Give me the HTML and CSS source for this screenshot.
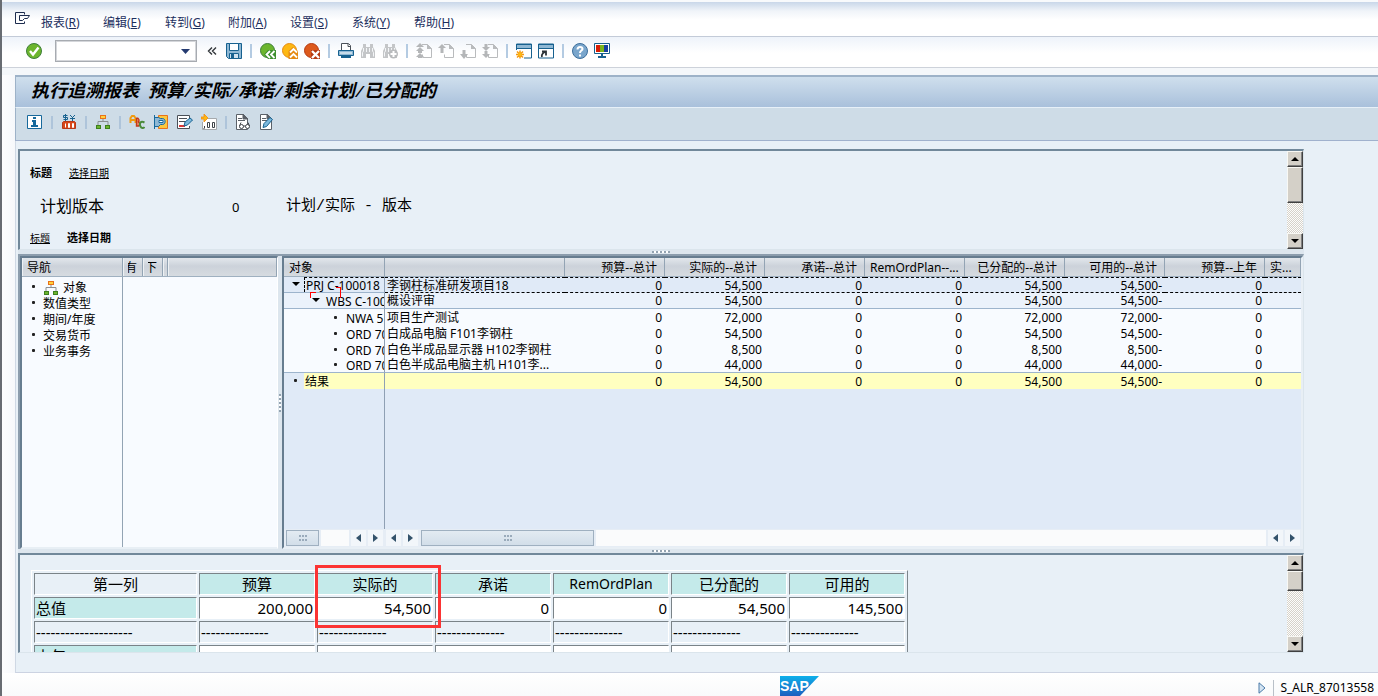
FILE: index.html
```html
<!DOCTYPE html>
<html lang="zh-CN">
<head>
<meta charset="utf-8">
<title>执行追溯报表</title>
<link rel="stylesheet" href="styles.css">
</head>
<body>
<svg class="defs" aria-hidden="true">
  <defs>
    <symbol id="bino" viewBox="0 0 16 16"><path d="M3 1h3v3h4V1h3v3l2 4v7h-5v-4H6v4H1V8l2-4z" fill="#c4c6c8"/><path d="M3.500 5v3l-1 1.500v4M12.500 5v3l1 1.500v4M6.500 5v4M9.500 5v4" stroke="#f4f6f8" fill="none"/></symbol>
    <symbol id="page" viewBox="0 0 16 16"><path d="M6 1.500h5.500l4 4v9h-9v-3" fill="none" stroke="#b9bbbd"/><path d="M11 1v5h5z" fill="#b9bbbd"/></symbol>
    <symbol id="org" viewBox="0 0 16 16"><path d="M8 5v3M3 11V7.500h10V11" fill="none" stroke="#8b8f92"/><rect x="5.500" y="1.500" width="5" height="3" fill="#ffd23c" stroke="#e8721a"/><rect x="1.500" y="11.500" width="4" height="3" fill="#6cb52d" stroke="#3d7f1e"/><rect x="10.500" y="11.500" width="4" height="3" fill="#6cb52d" stroke="#3d7f1e"/></symbol>
    <symbol id="window" viewBox="0 0 16 16"><path d="M.5 1v14h15V1z" fill="#fff" stroke="#17618f"/><path d="M0 1h16v5H0z" fill="#17618f"/><path d="M1 2h14v3H1z" fill="#8fb8d4"/></symbol>
  </defs>
</svg>
<div class="app">
  <nav class="menubar" aria-label="菜单">
    <button class="icon-btn" aria-label="系统菜单"><svg width="16" height="14" viewBox="0 0 16 14"><path d="M9.500 2.500V.5h-9v11h9v-2M4.500 3.500h10l-2 3h-3l-2 2h-3z" fill="none" stroke="#1d2c4e"/></svg></button>
    <a href="#">报表(<u>R</u>)</a><a href="#">编辑(<u>E</u>)</a><a href="#">转到(<u>G</u>)</a><a href="#">附加(<u>A</u>)</a><a href="#">设置(<u>S</u>)</a><a href="#">系统(<u>Y</u>)</a><a href="#">帮助(<u>H</u>)</a>
  </nav>

  <div class="toolbar" role="toolbar" aria-label="标准工具栏">
    <button class="icon-btn enter" aria-label="回车"><svg viewBox="0 0 16 16"><circle cx="8" cy="8" r="7.500" fill="#6cb52d" stroke="#3e7f3a"/><path d="M4 8l3 3.500 5.500-7" fill="none" stroke="#fff" stroke-width="2.400"/></svg></button>
    <div class="command">
      <input type="text" aria-label="命令">
      <button class="drop" aria-label="历史"><svg width="9" height="5" viewBox="0 0 9 5"><path d="M0 0h9L4.500 5z" fill="#243a70"/></svg></button>
    </div>
    <button class="icon-btn collapse" aria-label="收起"><svg class="chev" viewBox="0 0 10 16"><path d="M5 4.500L1.500 8 5 11.500M9 4.500L5.500 8 9 11.500" fill="none" stroke="#33373b" stroke-width="1.400"/></svg></button>
    <button class="icon-btn" aria-label="保存"><svg viewBox="0 0 16 16"><path d="M.5.5h15v15h-13l-2-2z" fill="#8fb8d4" stroke="#17618f"/><path d="M3.500.5h9v7h-9z" fill="#fff" stroke="#17618f"/><path d="M3.500 10.500h9v5h-9z" fill="#cfe2ef" stroke="#17618f"/><path d="M5 11h3v4H5z" fill="#17618f"/></svg></button>
    <span class="sep"></span>
    <button class="icon-btn" aria-label="返回"><svg viewBox="0 0 16 16"><circle cx="7.500" cy="7.500" r="7" fill="#6cb52d" stroke="#3e7f3a"/><path d="M8 7h8v9H8l-4-4.500z" fill="#3e8f2e"/><path d="M10 8l-3.500 3.500L10 15M14.500 8L11 11.500l3.500 3.500" fill="none" stroke="#fff" stroke-width="1.800"/></svg></button>
    <button class="icon-btn" aria-label="退出"><svg viewBox="0 0 16 16"><circle cx="7.500" cy="7.500" r="7" fill="#fdb813" stroke="#e58a12"/><path d="M6.500 16V8L11 4l5 4v8z" fill="#e58a12"/><path d="M8 9.500L11.500 6 15 9.500M8 14.500l3.500-3.500 3.500 3.500" fill="none" stroke="#fff" stroke-width="1.800"/></svg></button>
    <button class="icon-btn" aria-label="取消"><svg viewBox="0 0 16 16"><circle cx="7.500" cy="7.500" r="7" fill="#dd5a1c" stroke="#b53a12"/><path d="M7 7h9v9H7z" fill="#b53a12"/><path d="M8 8l7 7M15 8l-7 7" fill="none" stroke="#fff" stroke-width="2.400"/></svg></button>
    <span class="sep"></span>
    <button class="icon-btn" aria-label="打印"><svg viewBox="0 0 16 16"><path d="M3.500 8V.5h7l2 2V8" fill="#fff" stroke="#4a5058"/><path d="M10 1v2.500h3" fill="none" stroke="#4a5058"/><path d="M.5 7.500h15v5H.5z" fill="#8fb8d4" stroke="#17618f"/><path d="M2 10h12" stroke="#fff"/><path d="M3 13h10v2H3z" fill="#17618f"/></svg></button>
    <button class="icon-btn" aria-label="查找" disabled><svg viewBox="0 0 16 16"><use href="#bino"/></svg></button>
    <button class="icon-btn" aria-label="继续查找" disabled><svg viewBox="0 0 16 16"><use href="#bino"/><circle cx="11.500" cy="11" r="4.500" fill="#b9bbbd"/><path d="M11.500 8v6M8.500 11h6" stroke="#fff" stroke-width="2"/></svg></button>
    <span class="sep"></span>
    <button class="icon-btn" aria-label="首页" disabled><svg viewBox="0 0 16 16"><use href="#page"/><path d="M4 0l4 4H0zM4 4l4 4H0zM2 8h4v2H2zM4 10l4 4H0zM2 13h4v2H2z" fill="#b4b6b8"/></svg></button>
    <button class="icon-btn" aria-label="上一页" disabled><svg viewBox="0 0 16 16"><use href="#page"/><path d="M4 1l4 4H5.500v5h-3V5H0z" fill="#b4b6b8"/></svg></button>
    <button class="icon-btn" aria-label="下一页" disabled><svg viewBox="0 0 16 16"><use href="#page"/><path d="M4 16l4-5H5.500V7h-3v4H0z" fill="#b4b6b8"/></svg></button>
    <button class="icon-btn" aria-label="末页" disabled><svg viewBox="0 0 16 16"><use href="#page"/><path d="M2.500 1h3v3h-3zM4 8L0 4h8zM2.500 8h3v3h-3zM4 15l-4-4h8z" fill="#b4b6b8"/></svg></button>
    <span class="sep"></span>
    <button class="icon-btn" aria-label="新建会话"><svg viewBox="0 0 16 16"><use href="#window"/><path d="M0 7h8v9H0z" fill="#fff"/><path d="M4 7.500v8M0 11.500h8M1 8.500l6 6M7 8.500l-6 6" stroke="#f59a12" stroke-width="1.500"/><circle cx="4" cy="11.500" r="2" fill="#fdb813"/></svg></button>
    <button class="icon-btn" aria-label="创建快捷方式"><svg viewBox="0 0 16 16"><use href="#window"/><path d="M4 14c-1-3 1-4 3-5M4 8.500h4v4" fill="none" stroke="#2d3338" stroke-width="1.800"/></svg></button>
    <span class="sep"></span>
    <button class="icon-btn" aria-label="帮助"><svg viewBox="0 0 16 16"><circle cx="8" cy="8" r="7.500" fill="#7aa6cc" stroke="#3d6f9c"/><path d="M5.500 6.500c0-3.500 5-3 5-.5 0 1.500-2.500 1.800-2.500 4M8 11.500v2" fill="none" stroke="#fff" stroke-width="2"/></svg></button>
    <button class="icon-btn" aria-label="布局"><svg viewBox="0 0 16 16"><path d="M.5.500h15v10H.5z" fill="#fff" stroke="#17618f"/><path d="M2 2h4v7H2z" fill="#d81e05"/><path d="M6 2h4v7H6z" fill="#7ab51d"/><path d="M10 2h4v7h-4z" fill="#17409f"/><path d="M7 11h2v2h3v2H4v-2h3z" fill="#17618f"/></svg></button>
  </div>

  <main class="screen">
    <h1 class="title">执行追溯报表<span> </span>预算<span>/</span>实际<span>/</span>承诺<span>/</span>剩余计划<span>/</span>已分配的</h1>
    <div class="app-toolbar" role="toolbar" aria-label="应用工具栏">
      <button class="icon-btn" aria-label="信息"><svg viewBox="0 0 16 16"><path d="M.5 1.500h14v13H.5z" fill="#fff" stroke="#17699c"/><path d="M6 3h3v2H6zM5 6h4v5h2v2H4v-2h2V8H5z" fill="#17699c"/></svg></button>
      <span class="bar"></span>
      <button class="icon-btn" aria-label="货币"><svg viewBox="0 0 16 16"><path d="M6.500 1.500h-4v2h4v2h-4M4.500 0v7M9 1l2.500 2.500L14 1M11.500 3v4M9 4.500h5" fill="none" stroke="#17618f"/><path d="M2.500 7.500h11l1 1v6h-13v-6z" fill="#d8471a" stroke="#b5391a"/><path d="M4.500 9.500v4M7.500 9.500h1v4h-1zM11.500 9.500h1v4h-1z" fill="none" stroke="#fff"/></svg></button>
      <span class="bar"></span>
      <button class="icon-btn" aria-label="层次"><svg viewBox="0 0 16 16"><use href="#org"/></svg></button>
      <span class="bar"></span>
      <button class="icon-btn" aria-label="文本"><svg viewBox="0 0 16 16"><path d="M1.500 9V4l1.500-2h2l1.500 2v5M2 6h4" fill="none" stroke="#f09a10" stroke-width="2"/><path d="M7.500 4v8h2c2.500-1 1-4-.5-4 2-1 1-4-1.500-4" fill="#e88a6a" stroke="#c23a1a" stroke-width="1.400"/><path d="M15.500 8.500c-4-2-5.500 1-4 4 1 2 3 2 4 .5" fill="none" stroke="#4a8a3a" stroke-width="2"/></svg></button>
      <button class="icon-btn" aria-label="展开"><svg viewBox="0 0 16 16"><path d="M5.500 1.500h9v13h-9z" fill="#fdc83c" stroke="#e8721a"/><path d="M1.500 1v14M1.500 3.500h4l2 1h2c3.500 0 3.500 6 0 6h-2l-2 2h-4" fill="#8fb8d4" stroke="#17699c"/><path d="M6 6.500h4v2H6z" fill="#fff" stroke="#17699c"/></svg></button>
      <button class="icon-btn" aria-label="编辑文本"><svg viewBox="0 0 16 16"><path d="M12.500 5V1.500H.5v13h12V12" fill="#fff" stroke="#4a5058"/><path d="M2 4.500h8M2 7.500h6" stroke="#4a5058"/><path d="M2 11h6v2H2z" fill="#d83a3a"/><path d="M7 12l1-4 5-4 2.500 2-5 5z" fill="#7cb8dc" stroke="#17618f"/></svg></button>
      <button class="icon-btn" aria-label="小数位"><svg viewBox="0 0 16 16"><path d="M7 4.500h8.500v11H1.500V8" fill="#fff" stroke="#a5a9ad"/><path d="M0 3h3V0l4 4-4 4V5H0z" fill="#fdb813" stroke="#f08a10" stroke-width=".8"/><path d="M3.500 12v2l-1 1M6.500 8.500h2v5h-2zM11.500 8.500h2v5h-2z" fill="none" stroke="#3d4248"/></svg></button>
      <span class="bar"></span>
      <button class="icon-btn" aria-label="显示文档"><svg viewBox="0 0 16 16"><path d="M1.500.5h7l4 4v11h-11z" fill="#fff" stroke="#5b6168"/><path d="M8 0v5h5zM3 4.500h4M3 6.500h7" fill="#5b6168" stroke="#5b6168"/><path d="M4.500 12l1.500-3.500M14.500 12L13 8.500" stroke="#3d4248"/><circle cx="6.500" cy="12.500" r="2" fill="#fff" stroke="#3d4248"/><circle cx="12.500" cy="12.500" r="2" fill="#fff" stroke="#3d4248"/><path d="M8.500 12h2" stroke="#3d4248"/></svg></button>
      <button class="icon-btn" aria-label="更改文档"><svg viewBox="0 0 16 16"><path d="M1.500.5h7l4 4v11h-11z" fill="#fff" stroke="#5b6168"/><path d="M8 0v5h5zM3 4.500h4M3 6.500h5" fill="#5b6168" stroke="#5b6168"/><path d="M4 13.500l1-4 6-6 2.500 2-6 7z" fill="#7cb8dc" stroke="#17618f"/></svg></button>
    </div>

    <div class="work">
      <section class="panel selection">
        <div class="panel-body">
          <div class="tabs"><b>标题</b><a href="#">选择日期</a></div>
          <div class="version"><span>计划版本</span><span class="num">0</span><span class="mono">计划/实际 - 版本</span></div>
          <div class="tabs lower"><a href="#">标题</a><b>选择日期</b></div>
        </div>
        <div class="vscroll"><button aria-label="向上"><i class="tri up"></i></button><span class="thumb tall"></span><span class="track"></span><button aria-label="向下"><i class="tri down"></i></button></div>
      </section>
      <div class="splitter"></div>

      <div class="middle">
        <section class="nav-pane">
          <div class="nav-head"><span class="nav-title">导航</span><span class="nav-flag"><i>有</i></span><span class="nav-flag"><i>下</i></span><span class="nav-thin"></span><span class="nav-rest"></span></div>
          <div class="nav-body">
            <ul class="nav-list">
              <li><svg width="16" height="16" viewBox="0 0 16 16"><use href="#org"/></svg>对象</li>
              <li>数值类型</li><li>期间/年度</li><li>交易货币</li><li>业务事务</li>
            </ul>
          </div>
        </section>
        <div class="vsplit"></div>
        <section class="grid-pane">
          <table class="grid">
            <colgroup><col class="c-obj"><col class="c-name"><col class="c-val"><col class="c-val"><col class="c-val"><col class="c-val"><col class="c-val"><col class="c-val"><col class="c-val"><col></colgroup>
            <thead><tr><th class="l">对象</th><th></th><th>预算--总计</th><th>实际的--总计</th><th>承诺--总计</th><th>RemOrdPlan--...</th><th>已分配的--总计</th><th>可用的--总计</th><th>预算--上年</th><th class="l">实...</th></tr></thead>
            <tbody>
              <tr class="sel"><td><div class="node"><i class="open"></i><span class="focus">PRJ C-100018</span></div></td><td>李钢柱标准研发项目18</td><td>0</td><td>54,500</td><td>0</td><td>0</td><td>54,500</td><td>54,500-</td><td>0</td><td></td></tr>
              <tr class="sub"><td><div class="node lv1"><i class="open"></i><span>WBS C-100</span></div></td><td>概设评审</td><td>0</td><td>54,500</td><td>0</td><td>0</td><td>54,500</td><td>54,500-</td><td>0</td><td></td></tr>
              <tr><td><div class="node lv2"><i class="dot"></i><span>NWA 5</span></div></td><td>项目生产测试</td><td>0</td><td>72,000</td><td>0</td><td>0</td><td>72,000</td><td>72,000-</td><td>0</td><td></td></tr>
              <tr><td><div class="node lv2"><i class="dot"></i><span>ORD 70</span></div></td><td>白成品电脑 F101李钢柱</td><td>0</td><td>54,500</td><td>0</td><td>0</td><td>54,500</td><td>54,500-</td><td>0</td><td></td></tr>
              <tr><td><div class="node lv2"><i class="dot"></i><span>ORD 70</span></div></td><td>白色半成品显示器 H102李钢柱</td><td>0</td><td>8,500</td><td>0</td><td>0</td><td>8,500</td><td>8,500-</td><td>0</td><td></td></tr>
              <tr class="last"><td><div class="node lv2"><i class="dot"></i><span>ORD 70</span></div></td><td>白色半成品电脑主机 H101李...</td><td>0</td><td>44,000</td><td>0</td><td>0</td><td>44,000</td><td>44,000-</td><td>0</td><td></td></tr>
              <tr class="total"><td><div class="node"><i class="dot"></i><span class="fill">结果</span></div></td><td></td><td>0</td><td>54,500</td><td>0</td><td>0</td><td>54,500</td><td>54,500-</td><td>0</td><td></td></tr>
            </tbody>
          </table>
          <svg class="mark" width="34" height="14" viewBox="0 0 34 14" aria-hidden="true"><path d="M0 6h6v1H1v5H0zM26 1h5v11h-1V2h-4z" fill="#f00"/></svg>
          <div class="grid-fill"></div>
          <div class="hscrolls">
            <div class="hscroll first"><span class="hthumb small"><i></i></span><span class="htrack"></span><button aria-label="向左"><i class="tri left"></i></button><button aria-label="向右"><i class="tri right"></i></button></div>
            <div class="hscroll second"><button aria-label="向左"><i class="tri left"></i></button><button aria-label="向右"><i class="tri right"></i></button><span class="hthumb big"><i></i></span><span class="htrack"></span><button aria-label="向左"><i class="tri left"></i></button><button aria-label="向右"><i class="tri right"></i></button></div>
          </div>
        </section>
      </div>
      <div class="splitter"></div>

      <section class="panel summary">
        <div class="panel-body">
          <table class="sum">
            <thead><tr><th class="plain">第一列</th><th>预算</th><th>实际的</th><th>承诺</th><th class="latin">RemOrdPlan</th><th>已分配的</th><th>可用的</th></tr></thead>
            <tbody>
              <tr><th>总值</th><td>200,000</td><td>54,500</td><td>0</td><td>0</td><td>54,500</td><td>145,500</td></tr>
              <tr class="rule"><td>--------------------</td><td>--------------</td><td>--------------</td><td>--------------</td><td>--------------</td><td>--------------</td><td>--------------</td></tr>
              <tr><th>上年</th><td>0</td><td>0</td><td>0</td><td>0</td><td>0</td><td>0</td></tr>
            </tbody>
          </table>
          <div class="highlight"></div>
        </div>
        <div class="vscroll"><button aria-label="向上"><i class="tri up"></i></button><span class="thumb short"></span><span class="track"></span><button aria-label="向下"><i class="tri down"></i></button></div>
      </section>
    </div>
  </main>

  <footer class="status">
    <svg class="logo" width="39" height="20" viewBox="0 0 39 20" role="img" aria-label="SAP"><defs><linearGradient id="sapfill" x1="0" y1="0" x2="0" y2="1"><stop offset="0" stop-color="#0eb0ea"/><stop offset="1" stop-color="#1d5fbf"/></linearGradient></defs><path d="M0 0h39L20 20H0z" fill="url(#sapfill)"/><text x="0" y="15" class="logo-text">SAP</text></svg>
    <div class="tx">
      <button class="icon-btn" aria-label="展开状态"><svg class="play" viewBox="0 0 8 12"><path d="M1 .8L7 6l-6 5.200z" fill="#d4e4f2" stroke="#4a7aa8"/></svg></button>
      <span class="tx-code">S_ALR_87013558</span>
    </div>
  </footer>
</div>
</body>
</html>
```

FILE: styles.css
```css
* { box-sizing: border-box; }
body { margin: 0; font: 12px/16px "Noto Sans", "Noto Sans CJK SC", sans-serif; color: #000; background: #fff; }
button { border: 0; padding: 0; margin: 0; background: none; font: inherit; display: flex; align-items: center; justify-content: center; }
a { color: inherit; }
.defs { position: absolute; width: 0; height: 0; }
.app { height: 100vh; display: flex; flex-direction: column; border-left: 2px solid #686c72; overflow: hidden; }

.menubar { height: 37px; flex: none; display: flex; align-items: center; gap: 23px; padding: 7px 0 0 13px; border-top: 2px solid #f8fafc; border-bottom: 1px solid #c3cbd8; background: linear-gradient(#c9d7e9, #f0f4f9 9px, #fff 18px); color: #1c2f5e; white-space: nowrap; }
.menubar a { text-decoration: none; min-width: 39px; }
.menubar .icon-btn { margin-right: -13px; align-self: flex-start; margin-top: 3px; }

.toolbar { height: 31px; flex: none; display: flex; align-items: center; gap: 6px; padding: 0 0 2px 24px; border-bottom: 1px solid #cdd2da; background: linear-gradient(#eef3fa, #fff 16px); }
.icon-btn { flex: none; }
.toolbar svg, .app-toolbar svg { width: 16px; height: 16px; display: block; }
.toolbar .chev { width: 10px; }
.enter { margin-right: 7px; }
.collapse { margin: 0 3px 0 4px; }
.command { width: 142px; height: 22px; display: flex; border: 1px solid #a7abb1; outline: 1px solid #d4d6da; outline-offset: -2px; background: #fff; }
.command input { flex: 1; min-width: 0; border: 0; padding: 0 3px; background: none; font: inherit; outline: 0; }
.command .drop { width: 21px; }
.toolbar .drop svg { width: 9px; height: 5px; }
.sep { width: 2px; height: 14px; margin: 0 2px; background: #b4cbe2; }

.screen { flex: 1; min-height: 0; display: flex; flex-direction: column; padding-left: 13px; background: linear-gradient(90deg, #fdfdfe, #f6f8fb 13px); border-top: 7px solid #f4f7fa; }
.title { height: 33px; flex: none; margin: 0; padding-left: 15px; border-top: 2px solid #9db2c8; border-left: 1px solid #9db2c8; border-bottom: 1px solid #e7f0f8; background: linear-gradient(#cfdfed, #a9c0db); font: italic bold 18px/25px "Noto Sans CJK SC", sans-serif; white-space: pre; }
.title span { font-family: "Liberation Mono", monospace; font-size: 15px; }
.app-toolbar { height: 33px; flex: none; display: flex; align-items: center; gap: 8px; padding: 0 0 4px 11px; border-left: 1px solid #9db2c8; border-bottom: 1px solid #a0b1cd; background: #cedce7; }
.bar { width: 2px; height: 13px; background: #aec4da; }

.work { flex: 1; min-height: 0; display: flex; flex-direction: column; padding: 8px 74px 19px 2px; border-left: 1px solid #cfd8e4; border-bottom: 1px solid #ccd3e2; background: #e8f0f7; }
.panel { flex: none; display: flex; border: solid #71889a; border-width: 2px 1px 1px 2px; border-right-color: #dbe5ec; border-bottom-color: #dbe5ec; overflow: hidden; background: #e8f0f7; }
.panel-body { flex: 1; min-width: 0; position: relative; overflow: hidden; }
.selection { height: 101px; }
.summary { height: 100px; }
.tabs { display: flex; gap: 17px; padding: 14px 0 0 10px; font-size: 10px; }
.tabs b { font-size: 11px; }
.tabs.lower { padding-top: 14px; }
.version { display: grid; grid-template-columns: 192px 54px auto; align-items: center; height: 24px; margin-top: 11px; padding-left: 20px; font-size: 16px; line-height: 24px; }
.version .num { font-size: 13px; padding-top: 2px; }
.version .mono { font: 15px/24px "Liberation Mono", "Noto Sans CJK SC", monospace; padding-top: 3px; }

.vscroll { width: 16px; flex: none; display: flex; flex-direction: column; }
.vscroll button, .thumb { height: 16px; flex: none; background: #d4d0c8; border: 1px solid; border-color: #f8f8f4 #404040 #404040 #f8f8f4; box-shadow: inset -1px -1px #808080; }
.thumb.tall { height: 36px; }
.thumb.short { height: 20px; }
.track { flex: 1; background: repeating-conic-gradient(#d6d2ca 0 25%, #fdfdfc 0 50%) 0 0 / 2px 2px; }
.tri { width: 0; height: 0; border: 4px solid transparent; }
.tri.up { border-top: 0; border-bottom-color: #000; }
.tri.down { border-bottom: 0; border-top-color: #000; }
.tri.left { border-left: 0; border-right: 5px solid #34536b; }
.tri.right { border-right: 0; border-left: 5px solid #34536b; }

.splitter { height: 4px; flex: none; display: flex; align-items: center; justify-content: center; background: #dde6ee; }
.splitter::before { content: ""; width: 18px; height: 2px; background: repeating-linear-gradient(90deg, #93a3b1 0 2px, #fff 2px 4px); }
.middle { flex: 1; min-height: 0; display: flex; border: solid #8c9dad; border-width: 2px 1px 0 2px; border-right-color: #dbe5ec; background: #dde6ee; }
.nav-pane { width: 258px; flex: none; display: flex; flex-direction: column; border: 2px solid #677d90; border-right: 1px solid #fff; border-bottom: 2px solid #e8eff5; background: #f8fbff; }
.nav-head { height: 19px; display: flex; line-height: 20px; background: linear-gradient(#e2e7ec, #ccd2da 45%, #d6dbe0); border-bottom: 1px solid #9fb0c0; }
.nav-head > span { border-right: 1px solid #93a4b4; box-shadow: inset 1px 0 #edf1f4; }
.nav-title { width: 101px; padding-left: 5px; }
.nav-flag { width: 20px; display: flex; justify-content: center; }
.nav-flag i { width: 9px; font-style: normal; overflow: hidden; display: flex; justify-content: flex-end; }
.nav-thin { width: 5px; }
.nav-rest { flex: 1; }
.nav-body { flex: 1; display: flex; }
.nav-list { width: 101px; margin: 0; padding: 3px 0 0 21px; list-style: none; border-right: 1px solid #93a4b4; }
.nav-list li { display: flex; align-items: center; gap: 4px; height: 16px; position: relative; }
.nav-list li::before { content: ""; position: absolute; left: -11px; top: 5px; width: 3px; height: 3px; background: #222; border-radius: 1px; }
.vsplit { width: 4px; flex: none; display: flex; align-items: center; justify-content: center; background: #dde6ee; }
.vsplit::before { content: ""; width: 2px; height: 18px; background: repeating-linear-gradient(#93a3b1 0 2px, #fff 2px 4px); }

.grid-pane { flex: 1; min-width: 0; position: relative; display: flex; flex-direction: column; border: 2px solid #677d90; border-right-color: #e8eff5; border-bottom-color: #e8eff5; background: #e0eaf7; overflow: hidden; }
.grid { width: 100%; flex: none; table-layout: fixed; border-collapse: separate; border-spacing: 0; }
.c-obj { width: 101px; }
.c-name { width: 180px; }
.c-val { width: 100px; }
.grid th { height: 19px; padding: 1px 7px 0 5px; font-weight: normal; line-height: 17px; text-align: right; white-space: nowrap; overflow: hidden; border-right: 1px solid #93a4b4; border-bottom: 1px solid #9fb0c0; background: linear-gradient(#e2e7ec, #ccd2da 45%, #d6dbe0); }
.grid th.l { text-align: left; padding-right: 0; }
.grid td { height: 16px; padding: 1px 3px 0 2px; line-height: 15px; text-align: right; white-space: nowrap; overflow: hidden; background: #f8fbff; }
.grid td:nth-child(2) { text-align: left; padding-right: 0; }
.grid .sel td { background: #e0eaf7; border-top: 1px dashed #000; border-bottom: 1px dashed #000; line-height: 13px; }
.grid .sub td { background: #ebf2fb; border-bottom: 1px solid #9db4cc; line-height: 14px; }
.grid .last td { border-bottom: 1px solid #9db4cc; line-height: 14px; }
.grid .total td { background: #ffffc0; }
.grid .total td:first-child { background: #e0eaf7; }
.grid td:first-child { padding: 0; text-align: left; border-right: 1px solid #8fa0b4; }
.grid .sel td:first-child { border-top: 0; border-bottom: 1px solid #9db4cc; }
.node { display: flex; height: 15px; line-height: 17px; overflow: hidden; }
.node i { width: 20px; flex: none; }
.node span { flex: none; padding-left: 2px; }
.node .focus { border: 1px dashed #000; border-width: 1px 0 0 1px; padding-left: 1px; line-height: 15px; flex: 1; }
.node .fill { flex: 1; background: #ffffc0; padding-left: 1px; }
.grid .total .node { height: 16px; }
.lv1 { padding-left: 20px; }
.lv2 { padding-left: 40px; }
.open::before { content: ""; display: block; width: 0; margin: 5px 0 0 8px; border: solid transparent; border-width: 4px 4px 0; border-top-color: #000; }
.dot::before { content: ""; display: block; width: 3px; height: 3px; margin: 6px 0 0 10px; background: #222; border-radius: 1px; }
.mark { position: absolute; left: 26px; top: 28px; }
.grid-fill { flex: 1; width: 101px; border-right: 1px solid #8fa0b4; }
.hscrolls { height: 18px; flex: none; display: flex; background: #e6edf5; }
.hscroll { display: flex; gap: 2px; padding: 1px; }
.hscroll.first { width: 101px; flex: none; padding: 1px 2px; }
.hscroll.second { flex: 1; min-width: 0; }
.hscroll button { width: 15px; flex: none; background: #f2f6fa; }
.htrack { flex: 1; background: #fafbfc; }
.hthumb { flex: none; display: flex; align-items: center; justify-content: center; border: 1px solid #9fb0c0; background: linear-gradient(#e3ebf2, #d2dee9); }
.hthumb i { width: 8px; height: 6px; background: repeating-linear-gradient(90deg, #9aabbb 0 2px, transparent 2px 3px); }
.hthumb i::before { content: ""; display: block; height: 2px; margin-top: 2px; background: #dbe5ee; }
.small { width: 33px; }
.big { width: 173px; margin-left: 1px; }

.sum { margin: 15px 0 0 11px; width: 877px; table-layout: fixed; border: 1px solid; border-color: #fff #7d868c #7d868c #fff; border-spacing: 2px; font-size: 15px; line-height: 20px; }
.sum th, .sum td { height: 22px; padding: 0 1px; border: 1px solid; border-color: #7a8388 #fff #fff #7a8388; font-weight: normal; white-space: nowrap; overflow: hidden; }
.sum th { background: #c4eaea; }
.sum th:first-child { width: 163px; text-align: left; }
.sum .plain { background: none; }
.sum th.plain { text-align: center; }
.sum .latin { font-size: 14px; }
.sum td { text-align: right; background: #fff; }
.sum .rule td { text-align: left; background: none; }
.highlight { position: absolute; left: 295px; top: 10px; width: 126px; height: 63px; border: 3px solid #fb3434; }

.status { height: 23px; flex: none; display: grid; grid-template-columns: 1fr auto 1fr; align-items: end; padding-top: 3px; background: linear-gradient(#fff, #f9fafb); }
.status > .logo { grid-column: 2; margin-left: 218px; display: block; }
.logo-text { font: bold 14px "Liberation Sans", sans-serif; fill: #fff; }
.tx { grid-column: 3; justify-self: end; display: flex; align-items: center; gap: 7px; padding-right: 4px; white-space: nowrap; }
.tx-code { border-left: 1px solid #b9c0c8; padding-left: 6px; }
.play { width: 8px; height: 12px; }
```
